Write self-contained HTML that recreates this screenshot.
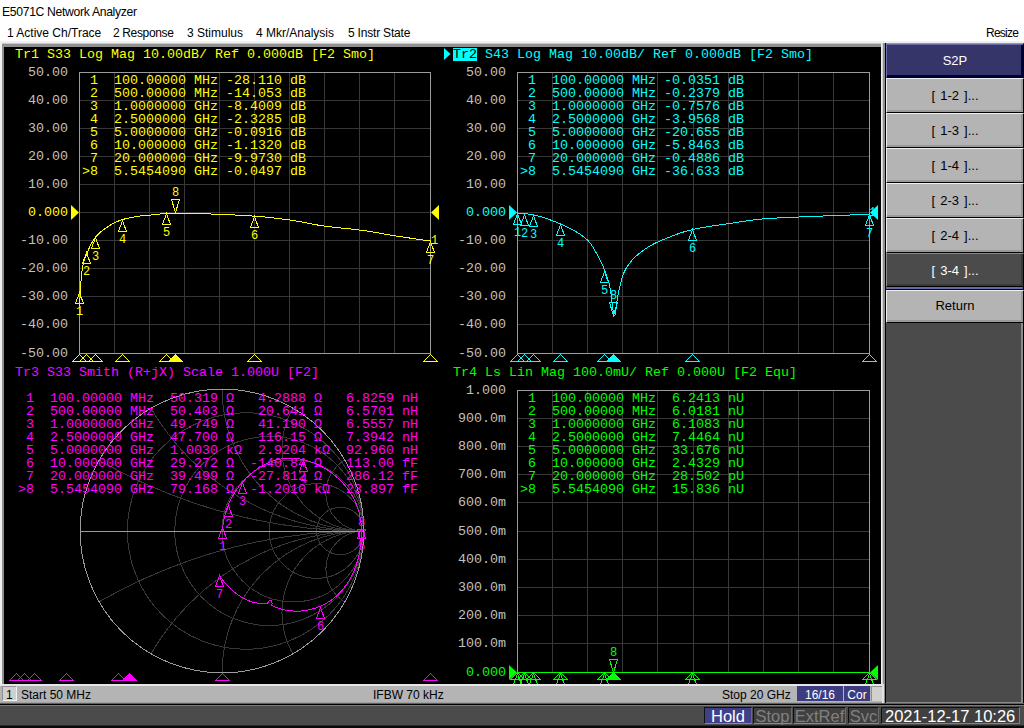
<!DOCTYPE html>
<html><head><meta charset="utf-8"><style>
html,body{margin:0;padding:0;}
body{width:1024px;height:728px;overflow:hidden;position:relative;background:#ffffff;font-family:"Liberation Sans", sans-serif;}
.a{position:absolute;}
.t{position:absolute;white-space:pre;line-height:1;}
.btn{position:absolute;left:886px;width:138px;height:35px;box-sizing:border-box;background:#b4b4b4;
 border-top:1px solid #f0f0f0;border-left:1px solid #f0f0f0;border-right:1px solid #000;border-bottom:1px solid #000;box-shadow:inset -2px -2px 0 #9a9a9a;}
.btn span{position:absolute;left:0;right:0;text-align:center;top:9px;font-size:13px;word-spacing:1.5px;color:#000;}
svg text{white-space:pre;}
</style></head><body>
<div class="t" style="left:2px;top:6px;font-size:12.2px;letter-spacing:-0.33px;color:#000">E5071C Network Analyzer</div>
<div class="t" style="left:7px;top:27px;font-size:12px;color:#000">1 Active Ch/Trace</div>
<div class="t" style="left:113px;top:27px;font-size:12px;letter-spacing:-0.35px;color:#000">2 Response</div>
<div class="t" style="left:187px;top:27px;font-size:12px;color:#000">3 Stimulus</div>
<div class="t" style="left:256px;top:27px;font-size:12px;color:#000">4 Mkr/Analysis</div>
<div class="t" style="left:348px;top:27px;font-size:12px;letter-spacing:-0.2px;color:#000">5 Instr State</div>
<div class="t" style="left:986px;top:27px;font-size:12px;letter-spacing:-0.75px;color:#000">Resize</div>
<!-- band under menu -->
<div class="a" style="left:0;top:41px;width:1024px;height:2px;background:#f0f0f0"></div>
<div class="a" style="left:0;top:43px;width:886px;height:1px;background:#c8c8c8"></div>
<div class="a" style="left:0;top:44px;width:886px;height:3px;background:#909090"></div>
<!-- left edge -->
<div class="a" style="left:0;top:43px;width:2px;height:662px;background:#f0f0f0"></div>
<div class="a" style="left:2px;top:44px;width:2px;height:640px;background:#909090"></div>
<!-- right of display -->
<div class="a" style="left:881px;top:43px;width:1px;height:661px;background:#f0f0f0"></div>
<div class="a" style="left:882px;top:43px;width:1px;height:661px;background:#d0d0d0"></div>
<div class="a" style="left:883px;top:43px;width:2px;height:661px;background:#909090"></div>
<div class="a" style="left:885px;top:43px;width:1px;height:661px;background:#000"></div>
<!-- softkey panel -->
<div class="a" style="left:886px;top:44px;width:136px;height:659px;background:#4b4b4b"></div>
<div class="a" style="left:1023px;top:43px;width:1px;height:661px;background:#000"></div>
<div class="a" style="left:886px;top:702px;width:137px;height:1px;background:#8a8a8a"></div>
<div class="a" style="left:1021px;top:323px;width:2px;height:380px;background:#8a8a8a"></div>
<div class="btn" style="top:43px;background:#35356a;border-top:1px solid #9090c8;border-left:1px solid #7070b0;box-shadow:inset 0 1px 0 #6a6aa0,inset -2px -2px 0 #000038"><span style="color:#fff;top:9px">S2P</span></div>
<div class="btn" style="top:78px"><span>[ 1-2 ]...</span></div>
<div class="btn" style="top:113px"><span>[ 1-3 ]...</span></div>
<div class="btn" style="top:148px"><span>[ 1-4 ]...</span></div>
<div class="btn" style="top:183px"><span>[ 2-3 ]...</span></div>
<div class="btn" style="top:218px"><span>[ 2-4 ]...</span></div>
<div class="btn" style="top:253px;height:34px;background:#4b4b4b;border-top:1px solid #8a8a8a;border-left:1px solid #8a8a8a;box-shadow:inset -2px -2px 0 #3a3a3a"><span style="color:#fff">[ 3-4 ]...</span></div>
<div class="a" style="left:886px;top:287px;width:137px;height:2px;background:#6a6aa8"></div>
<div class="a" style="left:886px;top:289px;width:137px;height:1px;background:#000030"></div>
<div class="btn" style="top:290px;height:33px"><span style="top:7px">Return</span></div>
<!-- display -->
<div class="a" style="left:4px;top:47px;width:877px;height:637px;background:#000"></div>
<svg class="a" style="left:0;top:0" width="1024" height="728" viewBox="0 0 1024 728">
<defs><clipPath id="disp"><rect x="4" y="47" width="877" height="637"/></clipPath></defs>
<g clip-path="url(#disp)">
<g style='font-family:"Liberation Mono",monospace;'>
<text x="15" y="58" fill="#ffff00" font-size="13.33" text-anchor="start" >Tr1 S33 Log Mag 10.00dB/ Ref 0.000dB [F2 Smo]</text>
<polygon points="444,48 444,60 450.5,54" fill="#00ffff"/>
<rect x="453" y="48" width="24" height="13" fill="#00ffff"/>
<text x="453" y="58" fill="#000" font-size="13.33" text-anchor="start" >Tr2</text>
<text x="485" y="58" fill="#00ffff" font-size="13.33" text-anchor="start" >S43 Log Mag 10.00dB/ Ref 0.000dB [F2 Smo]</text>
<text x="15" y="376" fill="#ff00ff" font-size="13.33" text-anchor="start" >Tr3 S33 Smith (R+jX) Scale 1.000U [F2]</text>
<text x="453" y="376" fill="#00ff00" font-size="13.33" text-anchor="start" >Tr4 Ls Lin Mag 100.0mU/ Ref 0.000U [F2 Equ]</text>
<rect x="114" y="72" width="1" height="282" fill="#383838"/>
<rect x="79" y="100" width="352" height="1" fill="#383838"/>
<rect x="149" y="72" width="1" height="282" fill="#383838"/>
<rect x="79" y="128" width="352" height="1" fill="#383838"/>
<rect x="184" y="72" width="1" height="282" fill="#383838"/>
<rect x="79" y="156" width="352" height="1" fill="#383838"/>
<rect x="219" y="72" width="1" height="282" fill="#383838"/>
<rect x="79" y="184" width="352" height="1" fill="#383838"/>
<rect x="254" y="72" width="1" height="282" fill="#383838"/>
<rect x="79" y="212" width="352" height="1" fill="#383838"/>
<rect x="289" y="72" width="1" height="282" fill="#383838"/>
<rect x="79" y="240" width="352" height="1" fill="#383838"/>
<rect x="324" y="72" width="1" height="282" fill="#383838"/>
<rect x="79" y="268" width="352" height="1" fill="#383838"/>
<rect x="359" y="72" width="1" height="282" fill="#383838"/>
<rect x="79" y="296" width="352" height="1" fill="#383838"/>
<rect x="394" y="72" width="1" height="282" fill="#383838"/>
<rect x="79" y="324" width="352" height="1" fill="#383838"/>
<rect x="79" y="72" width="352" height="1" fill="#9c9c9c"/>
<rect x="79" y="353" width="352" height="1" fill="#9c9c9c"/>
<rect x="79" y="72" width="1" height="282" fill="#9c9c9c"/>
<rect x="430" y="72" width="1" height="282" fill="#9c9c9c"/>
<rect x="552" y="72" width="1" height="282" fill="#383838"/>
<rect x="517" y="100" width="353" height="1" fill="#383838"/>
<rect x="587" y="72" width="1" height="282" fill="#383838"/>
<rect x="517" y="128" width="353" height="1" fill="#383838"/>
<rect x="622" y="72" width="1" height="282" fill="#383838"/>
<rect x="517" y="156" width="353" height="1" fill="#383838"/>
<rect x="657" y="72" width="1" height="282" fill="#383838"/>
<rect x="517" y="184" width="353" height="1" fill="#383838"/>
<rect x="693" y="72" width="1" height="282" fill="#383838"/>
<rect x="517" y="212" width="353" height="1" fill="#383838"/>
<rect x="728" y="72" width="1" height="282" fill="#383838"/>
<rect x="517" y="240" width="353" height="1" fill="#383838"/>
<rect x="763" y="72" width="1" height="282" fill="#383838"/>
<rect x="517" y="268" width="353" height="1" fill="#383838"/>
<rect x="798" y="72" width="1" height="282" fill="#383838"/>
<rect x="517" y="296" width="353" height="1" fill="#383838"/>
<rect x="833" y="72" width="1" height="282" fill="#383838"/>
<rect x="517" y="324" width="353" height="1" fill="#383838"/>
<rect x="517" y="72" width="353" height="1" fill="#9c9c9c"/>
<rect x="517" y="353" width="353" height="1" fill="#9c9c9c"/>
<rect x="517" y="72" width="1" height="282" fill="#9c9c9c"/>
<rect x="869" y="72" width="1" height="282" fill="#9c9c9c"/>
<rect x="552" y="390" width="1" height="283" fill="#383838"/>
<rect x="517" y="418" width="353" height="1" fill="#383838"/>
<rect x="587" y="390" width="1" height="283" fill="#383838"/>
<rect x="517" y="446" width="353" height="1" fill="#383838"/>
<rect x="622" y="390" width="1" height="283" fill="#383838"/>
<rect x="517" y="474" width="353" height="1" fill="#383838"/>
<rect x="657" y="390" width="1" height="283" fill="#383838"/>
<rect x="517" y="502" width="353" height="1" fill="#383838"/>
<rect x="693" y="390" width="1" height="283" fill="#383838"/>
<rect x="517" y="531" width="353" height="1" fill="#383838"/>
<rect x="728" y="390" width="1" height="283" fill="#383838"/>
<rect x="517" y="559" width="353" height="1" fill="#383838"/>
<rect x="763" y="390" width="1" height="283" fill="#383838"/>
<rect x="517" y="587" width="353" height="1" fill="#383838"/>
<rect x="798" y="390" width="1" height="283" fill="#383838"/>
<rect x="517" y="615" width="353" height="1" fill="#383838"/>
<rect x="833" y="390" width="1" height="283" fill="#383838"/>
<rect x="517" y="643" width="353" height="1" fill="#383838"/>
<rect x="517" y="390" width="353" height="1" fill="#9c9c9c"/>
<rect x="517" y="672" width="353" height="1" fill="#9c9c9c"/>
<rect x="517" y="390" width="1" height="283" fill="#9c9c9c"/>
<rect x="869" y="390" width="1" height="283" fill="#9c9c9c"/>
<text x="68" y="76" fill="#c0c0c0" font-size="13.33" text-anchor="end" >50.00</text>
<text x="506" y="76" fill="#c0c0c0" font-size="13.33" text-anchor="end" >50.00</text>
<text x="68" y="104" fill="#c0c0c0" font-size="13.33" text-anchor="end" >40.00</text>
<text x="506" y="104" fill="#c0c0c0" font-size="13.33" text-anchor="end" >40.00</text>
<text x="68" y="132" fill="#c0c0c0" font-size="13.33" text-anchor="end" >30.00</text>
<text x="506" y="132" fill="#c0c0c0" font-size="13.33" text-anchor="end" >30.00</text>
<text x="68" y="160" fill="#c0c0c0" font-size="13.33" text-anchor="end" >20.00</text>
<text x="506" y="160" fill="#c0c0c0" font-size="13.33" text-anchor="end" >20.00</text>
<text x="68" y="188" fill="#c0c0c0" font-size="13.33" text-anchor="end" >10.00</text>
<text x="506" y="188" fill="#c0c0c0" font-size="13.33" text-anchor="end" >10.00</text>
<text x="68" y="216" fill="#ffff00" font-size="13.33" text-anchor="end" >0.000</text>
<text x="506" y="216" fill="#00ffff" font-size="13.33" text-anchor="end" >0.000</text>
<text x="68" y="244" fill="#c0c0c0" font-size="13.33" text-anchor="end" >-10.00</text>
<text x="506" y="244" fill="#c0c0c0" font-size="13.33" text-anchor="end" >-10.00</text>
<text x="68" y="272" fill="#c0c0c0" font-size="13.33" text-anchor="end" >-20.00</text>
<text x="506" y="272" fill="#c0c0c0" font-size="13.33" text-anchor="end" >-20.00</text>
<text x="68" y="300" fill="#c0c0c0" font-size="13.33" text-anchor="end" >-30.00</text>
<text x="506" y="300" fill="#c0c0c0" font-size="13.33" text-anchor="end" >-30.00</text>
<text x="68" y="328" fill="#c0c0c0" font-size="13.33" text-anchor="end" >-40.00</text>
<text x="506" y="328" fill="#c0c0c0" font-size="13.33" text-anchor="end" >-40.00</text>
<text x="68" y="357" fill="#c0c0c0" font-size="13.33" text-anchor="end" >-50.00</text>
<text x="506" y="357" fill="#c0c0c0" font-size="13.33" text-anchor="end" >-50.00</text>
<text x="506" y="394" fill="#c0c0c0" font-size="13.33" text-anchor="end" >1.000</text>
<text x="506" y="422" fill="#c0c0c0" font-size="13.33" text-anchor="end" >900.0m</text>
<text x="506" y="450" fill="#c0c0c0" font-size="13.33" text-anchor="end" >800.0m</text>
<text x="506" y="478" fill="#c0c0c0" font-size="13.33" text-anchor="end" >700.0m</text>
<text x="506" y="506" fill="#c0c0c0" font-size="13.33" text-anchor="end" >600.0m</text>
<text x="506" y="535" fill="#c0c0c0" font-size="13.33" text-anchor="end" >500.0m</text>
<text x="506" y="563" fill="#c0c0c0" font-size="13.33" text-anchor="end" >400.0m</text>
<text x="506" y="591" fill="#c0c0c0" font-size="13.33" text-anchor="end" >300.0m</text>
<text x="506" y="619" fill="#c0c0c0" font-size="13.33" text-anchor="end" >200.0m</text>
<text x="506" y="647" fill="#c0c0c0" font-size="13.33" text-anchor="end" >100.0m</text>
<text x="506" y="676" fill="#00ff00" font-size="13.33" text-anchor="end" >0.000</text>
<polygon points="71,205 71,220 79,212.5" fill="#ffff00"/>
<polygon points="439,205 439,220 431,212.5" fill="#ffff00"/>
<polygon points="509,205 509,220 517,212.5" fill="#00ffff"/>
<polygon points="878,205 878,220 870,212.5" fill="#00ffff"/>
<polygon points="509,665 509,680 517,672.5" fill="#00ff00"/>
<polygon points="878,665 878,680 870,672.5" fill="#00ff00"/>
<text x="82" y="84" fill="#ffff00" font-size="13.33" text-anchor="start" xml:space="preserve"> 1  100.00000 MHz -28.110 dB</text>
<text x="82" y="97" fill="#ffff00" font-size="13.33" text-anchor="start" xml:space="preserve"> 2  500.00000 MHz -14.053 dB</text>
<text x="82" y="110" fill="#ffff00" font-size="13.33" text-anchor="start" xml:space="preserve"> 3  1.0000000 GHz -8.4009 dB</text>
<text x="82" y="123" fill="#ffff00" font-size="13.33" text-anchor="start" xml:space="preserve"> 4  2.5000000 GHz -2.3285 dB</text>
<text x="82" y="136" fill="#ffff00" font-size="13.33" text-anchor="start" xml:space="preserve"> 5  5.0000000 GHz -0.0916 dB</text>
<text x="82" y="149" fill="#ffff00" font-size="13.33" text-anchor="start" xml:space="preserve"> 6  10.000000 GHz -1.1320 dB</text>
<text x="82" y="162" fill="#ffff00" font-size="13.33" text-anchor="start" xml:space="preserve"> 7  20.000000 GHz -9.9730 dB</text>
<text x="82" y="175" fill="#ffff00" font-size="13.33" text-anchor="start" xml:space="preserve">&gt;8  5.5454090 GHz -0.0497 dB</text>
<text x="520" y="84" fill="#00ffff" font-size="13.33" text-anchor="start" xml:space="preserve"> 1  100.00000 MHz -0.0351 dB</text>
<text x="520" y="97" fill="#00ffff" font-size="13.33" text-anchor="start" xml:space="preserve"> 2  500.00000 MHz -0.2379 dB</text>
<text x="520" y="110" fill="#00ffff" font-size="13.33" text-anchor="start" xml:space="preserve"> 3  1.0000000 GHz -0.7576 dB</text>
<text x="520" y="123" fill="#00ffff" font-size="13.33" text-anchor="start" xml:space="preserve"> 4  2.5000000 GHz -3.9568 dB</text>
<text x="520" y="136" fill="#00ffff" font-size="13.33" text-anchor="start" xml:space="preserve"> 5  5.0000000 GHz -20.655 dB</text>
<text x="520" y="149" fill="#00ffff" font-size="13.33" text-anchor="start" xml:space="preserve"> 6  10.000000 GHz -5.8463 dB</text>
<text x="520" y="162" fill="#00ffff" font-size="13.33" text-anchor="start" xml:space="preserve"> 7  20.000000 GHz -0.4886 dB</text>
<text x="520" y="175" fill="#00ffff" font-size="13.33" text-anchor="start" xml:space="preserve">&gt;8  5.5454090 GHz -36.633 dB</text>
<text x="520" y="402" fill="#00ff00" font-size="13.33" text-anchor="start" xml:space="preserve"> 1  100.00000 MHz  6.2413 nU</text>
<text x="520" y="415" fill="#00ff00" font-size="13.33" text-anchor="start" xml:space="preserve"> 2  500.00000 MHz  6.0181 nU</text>
<text x="520" y="428" fill="#00ff00" font-size="13.33" text-anchor="start" xml:space="preserve"> 3  1.0000000 GHz  6.1083 nU</text>
<text x="520" y="441" fill="#00ff00" font-size="13.33" text-anchor="start" xml:space="preserve"> 4  2.5000000 GHz  7.4464 nU</text>
<text x="520" y="454" fill="#00ff00" font-size="13.33" text-anchor="start" xml:space="preserve"> 5  5.0000000 GHz  33.676 nU</text>
<text x="520" y="467" fill="#00ff00" font-size="13.33" text-anchor="start" xml:space="preserve"> 6  10.000000 GHz  2.4329 nU</text>
<text x="520" y="480" fill="#00ff00" font-size="13.33" text-anchor="start" xml:space="preserve"> 7  20.000000 GHz  28.502 pU</text>
<text x="520" y="493" fill="#00ff00" font-size="13.33" text-anchor="start" xml:space="preserve">&gt;8  5.5454090 GHz  15.836 nU</text>
<defs><clipPath id="uc"><circle cx="222.0" cy="531.0" r="142.4"/></clipPath></defs>
<g clip-path="url(#uc)" fill="none" stroke="#383838" stroke-width="1" shape-rendering="crispEdges">
<circle cx="245.65" cy="531.0" r="118.25"/>
<circle cx="269.30" cy="531.0" r="94.60"/>
<circle cx="292.95" cy="531.0" r="70.95"/>
<circle cx="316.60" cy="531.0" r="47.30"/>
<circle cx="340.25" cy="531.0" r="23.65"/>
<circle cx="363.90" cy="1.42" r="529.58"/>
<circle cx="363.90" cy="1060.58" r="529.58"/>
<circle cx="363.90" cy="285.22" r="245.78"/>
<circle cx="363.90" cy="776.78" r="245.78"/>
<circle cx="363.90" cy="389.10" r="141.90"/>
<circle cx="363.90" cy="672.90" r="141.90"/>
<circle cx="363.90" cy="449.07" r="81.93"/>
<circle cx="363.90" cy="612.93" r="81.93"/>
<circle cx="363.90" cy="492.98" r="38.02"/>
<circle cx="363.90" cy="569.02" r="38.02"/>
</g>
<circle cx="222.0" cy="531.0" r="141.9" fill="none" stroke="#9c9c9c" stroke-width="1" shape-rendering="crispEdges"/>
<rect x="80" y="531" width="284" height="1" fill="#9c9c9c"/>
<text x="18" y="402" fill="#ff00ff" font-size="13.33" text-anchor="start" xml:space="preserve"> 1  100.00000 MHz  50.319 Ω   4.2888 Ω   6.8259 nH</text>
<text x="18" y="415" fill="#ff00ff" font-size="13.33" text-anchor="start" xml:space="preserve"> 2  500.00000 MHz  50.403 Ω   20.641 Ω   6.5701 nH</text>
<text x="18" y="428" fill="#ff00ff" font-size="13.33" text-anchor="start" xml:space="preserve"> 3  1.0000000 GHz  49.749 Ω   41.190 Ω   6.5557 nH</text>
<text x="18" y="441" fill="#ff00ff" font-size="13.33" text-anchor="start" xml:space="preserve"> 4  2.5000000 GHz  47.700 Ω   116.15 Ω   7.3942 nH</text>
<text x="18" y="454" fill="#ff00ff" font-size="13.33" text-anchor="start" xml:space="preserve"> 5  5.0000000 GHz  1.0030 kΩ  2.9204 kΩ  92.960 nH</text>
<text x="18" y="467" fill="#ff00ff" font-size="13.33" text-anchor="start" xml:space="preserve"> 6  10.000000 GHz  29.272 Ω  -140.84 Ω   113.00 fF</text>
<text x="18" y="480" fill="#ff00ff" font-size="13.33" text-anchor="start" xml:space="preserve"> 7  20.000000 GHz  39.499 Ω  -27.812 Ω   286.12 fF</text>
<text x="18" y="493" fill="#ff00ff" font-size="13.33" text-anchor="start" xml:space="preserve">&gt;8  5.5454090 GHz  79.168 Ω  -1.2010 kΩ  23.897 fF</text>
<polyline points="79.50,305.73 79.58,304.43 79.67,303.13 79.75,301.83 79.84,300.52 79.92,299.21 80.00,297.90 80.09,296.58 80.17,295.26 80.26,293.94 80.34,292.62 80.42,291.28 80.51,289.86 80.59,288.38 80.68,286.87 80.76,285.36 80.84,283.87 80.93,282.42 81.01,281.05 81.10,279.78 81.18,278.64 81.26,277.66 81.35,276.83 81.43,276.04 81.52,275.27 81.60,274.53 81.68,273.81 81.77,273.12 81.85,272.46 81.94,271.81 82.02,271.19 82.10,270.59 82.19,270.01 82.27,269.45 82.36,268.91 82.44,268.39 82.52,267.89 82.61,267.41 82.69,266.94 82.78,266.49 82.86,266.06 82.94,265.64 83.03,265.23 83.11,264.84 83.20,264.47 83.28,264.10 83.36,263.75 83.45,263.41 83.53,263.08 83.62,262.76 83.70,262.44 83.78,262.13 83.87,261.83 83.95,261.53 84.04,261.25 84.12,260.96 84.20,260.69 84.29,260.42 84.37,260.16 84.46,259.90 84.54,259.65 84.62,259.40 84.71,259.16 84.79,258.92 84.88,258.69 84.96,258.46 85.04,258.23 85.13,258.01 85.21,257.79 85.30,257.58 85.38,257.37 85.46,257.16 85.55,256.95 85.63,256.75 85.72,256.55 85.80,256.35 85.88,256.15 85.97,255.95 86.05,255.75 86.14,255.56 86.22,255.36 86.30,255.16 86.39,254.97 86.47,254.77 86.56,254.58 86.64,254.38 86.72,254.18 86.81,253.99 86.89,253.79 86.98,253.59 87.06,253.38 87.14,253.18 87.23,252.97 87.31,252.76 87.40,252.55 87.48,252.33 87.56,252.11 87.65,251.90 87.73,251.68 87.82,251.46 87.90,251.24 87.98,251.03 88.07,250.81 88.15,250.59 88.24,250.37 88.32,250.16 88.40,249.94 88.49,249.73 88.57,249.51 88.66,249.30 88.74,249.09 88.82,248.88 88.91,248.67 88.99,248.46 89.08,248.26 89.16,248.06 89.24,247.86 89.33,247.66 89.41,247.46 89.49,247.27 89.58,247.08 89.66,246.90 89.75,246.71 89.83,246.53 89.91,246.36 90.00,246.18 90.08,246.02 90.17,245.85 90.25,245.69 90.33,245.53 90.42,245.37 90.50,245.21 90.59,245.05 90.67,244.90 90.75,244.74 90.84,244.59 90.92,244.44 91.01,244.28 91.09,244.13 91.17,243.98 91.26,243.83 91.34,243.68 91.43,243.54 91.51,243.39 91.59,243.25 91.68,243.10 91.76,242.96 91.85,242.82 91.93,242.67 92.01,242.53 92.10,242.39 92.18,242.25 92.27,242.12 92.35,241.98 92.43,241.84 92.52,241.71 92.60,241.57 92.69,241.44 92.77,241.31 92.85,241.18 92.94,241.05 93.02,240.92 93.11,240.79 93.19,240.66 93.27,240.53 93.36,240.41 93.44,240.28 93.53,240.16 93.61,240.03 93.69,239.91 93.78,239.79 93.86,239.67 93.95,239.55 94.03,239.43 94.11,239.31 94.20,239.19 94.28,239.08 94.37,238.96 94.45,238.84 94.53,238.73 94.62,238.62 94.70,238.50 94.79,238.39 94.87,238.28 94.95,238.17 95.04,238.06 95.12,237.95 95.21,237.84 95.29,237.74 95.37,237.63 95.46,237.52 95.54,237.42 95.63,237.31 95.71,237.21 95.79,237.11 95.88,237.01 95.96,236.91 96.05,236.81 96.13,236.71 96.21,236.61 96.21,236.61 97.05,235.64 97.89,234.72 98.73,233.85 99.57,233.01 100.40,232.22 101.24,231.47 102.08,230.76 102.92,230.10 103.75,229.48 104.59,228.89 105.43,228.32 106.27,227.75 107.11,227.20 107.94,226.65 108.78,226.12 109.62,225.60 110.46,225.10 111.29,224.60 112.13,224.12 112.97,223.66 113.81,223.21 114.65,222.78 115.48,222.36 116.32,221.96 117.16,221.57 118.00,221.21 118.84,220.86 119.67,220.53 120.51,220.23 121.35,219.94 122.19,219.67 123.02,219.42 123.86,219.18 124.70,218.96 125.54,218.74 126.38,218.52 127.21,218.32 128.05,218.12 128.89,217.94 129.73,217.76 130.56,217.58 131.40,217.42 132.24,217.26 133.08,217.10 133.92,216.96 134.75,216.82 135.59,216.68 136.43,216.55 137.27,216.43 138.10,216.31 138.94,216.20 139.78,216.09 140.62,215.98 141.46,215.89 142.29,215.79 143.13,215.70 143.97,215.61 144.81,215.53 145.65,215.45 146.48,215.37 147.32,215.29 148.16,215.22 149.00,215.14 149.83,215.07 150.67,215.00 151.51,214.92 152.35,214.85 153.19,214.77 154.02,214.70 154.86,214.62 155.70,214.54 156.54,214.45 157.37,214.37 158.21,214.28 159.05,214.19 159.89,214.08 160.73,213.95 161.56,213.82 162.40,213.69 163.24,213.57 164.08,213.46 164.91,213.36 165.75,213.29 166.59,213.26 167.43,213.24 168.27,213.22 169.10,213.21 169.94,213.19 170.78,213.18 171.62,213.17 172.45,213.16 173.29,213.15 174.13,213.15 174.97,213.14 175.81,213.14 176.64,213.14 177.48,213.14 178.32,213.15 179.16,213.15 180.00,213.16 180.83,213.16 181.67,213.17 182.51,213.18 183.35,213.20 184.18,213.21 185.02,213.22 185.86,213.24 186.70,213.26 187.54,213.27 188.37,213.29 189.21,213.31 190.05,213.33 190.89,213.35 191.72,213.38 192.56,213.40 193.40,213.42 194.24,213.45 195.08,213.47 195.91,213.50 196.75,213.52 197.59,213.55 198.43,213.58 199.26,213.60 200.10,213.63 200.94,213.66 201.78,213.69 202.62,213.72 203.45,213.74 204.29,213.77 205.13,213.80 205.97,213.83 206.81,213.86 207.64,213.89 208.48,213.91 209.32,213.94 210.16,213.97 210.99,214.00 211.83,214.02 212.67,214.05 213.51,214.08 214.35,214.11 215.18,214.14 216.02,214.17 216.86,214.20 217.70,214.23 218.53,214.27 219.37,214.30 220.21,214.33 221.05,214.36 221.89,214.40 222.72,214.43 223.56,214.47 224.40,214.50 225.24,214.54 226.07,214.58 226.91,214.61 227.75,214.65 228.59,214.69 229.43,214.73 230.26,214.77 231.10,214.81 231.94,214.85 232.78,214.89 233.61,214.93 234.45,214.98 235.29,215.02 236.13,215.06 236.97,215.11 237.80,215.15 238.64,215.20 239.48,215.24 240.32,215.29 241.16,215.34 241.99,215.39 242.83,215.43 243.67,215.48 244.51,215.53 245.34,215.58 246.18,215.63 247.02,215.69 247.86,215.74 248.70,215.79 249.53,215.85 250.37,215.90 251.21,215.95 252.05,216.01 252.88,216.07 253.72,216.12 254.56,216.18 255.40,216.24 256.24,216.30 257.07,216.36 257.91,216.43 258.75,216.49 259.59,216.56 260.42,216.63 261.26,216.71 262.10,216.78 262.94,216.86 263.78,216.93 264.61,217.01 265.45,217.09 266.29,217.17 267.13,217.26 267.97,217.34 268.80,217.43 269.64,217.52 270.48,217.61 271.32,217.70 272.15,217.79 272.99,217.88 273.83,217.98 274.67,218.07 275.51,218.17 276.34,218.27 277.18,218.37 278.02,218.47 278.86,218.57 279.69,218.67 280.53,218.77 281.37,218.88 282.21,218.98 283.05,219.09 283.88,219.20 284.72,219.30 285.56,219.41 286.40,219.52 287.23,219.63 288.07,219.74 288.91,219.85 289.75,219.97 290.59,220.09 291.42,220.21 292.26,220.34 293.10,220.48 293.94,220.61 294.77,220.75 295.61,220.90 296.45,221.04 297.29,221.19 298.13,221.34 298.96,221.50 299.80,221.65 300.64,221.81 301.48,221.97 302.32,222.13 303.15,222.29 303.99,222.45 304.83,222.62 305.67,222.78 306.50,222.95 307.34,223.11 308.18,223.27 309.02,223.44 309.86,223.60 310.69,223.76 311.53,223.92 312.37,224.08 313.21,224.24 314.04,224.39 314.88,224.55 315.72,224.70 316.56,224.84 317.40,224.99 318.23,225.13 319.07,225.27 319.91,225.41 320.75,225.54 321.58,225.67 322.42,225.79 323.26,225.91 324.10,226.03 324.94,226.14 325.77,226.25 326.61,226.36 327.45,226.47 328.29,226.57 329.13,226.67 329.96,226.78 330.80,226.88 331.64,226.97 332.48,227.07 333.31,227.17 334.15,227.26 334.99,227.35 335.83,227.44 336.67,227.53 337.50,227.63 338.34,227.71 339.18,227.80 340.02,227.89 340.85,227.98 341.69,228.07 342.53,228.15 343.37,228.24 344.21,228.33 345.04,228.41 345.88,228.50 346.72,228.59 347.56,228.68 348.39,228.77 349.23,228.85 350.07,228.94 350.91,229.03 351.75,229.13 352.58,229.22 353.42,229.31 354.26,229.41 355.10,229.50 355.94,229.60 356.77,229.70 357.61,229.80 358.45,229.90 359.29,230.00 360.12,230.11 360.96,230.22 361.80,230.33 362.64,230.44 363.48,230.56 364.31,230.67 365.15,230.79 365.99,230.92 366.83,231.04 367.66,231.17 368.50,231.30 369.34,231.43 370.18,231.57 371.02,231.70 371.85,231.84 372.69,231.98 373.53,232.12 374.37,232.26 375.20,232.41 376.04,232.55 376.88,232.69 377.72,232.84 378.56,232.99 379.39,233.13 380.23,233.28 381.07,233.43 381.91,233.58 382.74,233.72 383.58,233.87 384.42,234.02 385.26,234.17 386.10,234.31 386.93,234.46 387.77,234.60 388.61,234.75 389.45,234.89 390.29,235.03 391.12,235.17 391.96,235.31 392.80,235.44 393.64,235.58 394.47,235.71 395.31,235.84 396.15,235.97 396.99,236.10 397.83,236.23 398.66,236.36 399.50,236.49 400.34,236.62 401.18,236.75 402.01,236.88 402.85,237.01 403.69,237.14 404.53,237.26 405.37,237.39 406.20,237.52 407.04,237.64 407.88,237.77 408.72,237.89 409.55,238.02 410.39,238.14 411.23,238.27 412.07,238.39 412.91,238.52 413.74,238.64 414.58,238.76 415.42,238.88 416.26,239.01 417.10,239.13 417.93,239.25 418.77,239.37 419.61,239.49 420.45,239.61 421.28,239.73 422.12,239.85 422.96,239.97 423.80,240.09 424.64,240.21 425.47,240.33 426.31,240.44 427.15,240.56 427.99,240.68 428.82,240.79 429.66,240.91 430.50,241.02" fill="none" stroke="#ffff00" stroke-width="1" shape-rendering="crispEdges"/>
<polyline points="517.50,213.06 517.79,213.07 518.08,213.08 518.38,213.10 518.67,213.12 518.96,213.13 519.25,213.15 519.54,213.17 519.84,213.19 520.13,213.21 520.42,213.23 520.71,213.25 521.01,213.27 521.30,213.29 521.59,213.31 521.88,213.34 522.17,213.36 522.47,213.38 522.76,213.41 523.05,213.43 523.34,213.46 523.63,213.49 523.93,213.52 524.22,213.54 524.51,213.57 524.80,213.60 525.09,213.63 525.39,213.66 525.68,213.69 525.97,213.73 526.26,213.76 526.56,213.80 526.85,213.84 527.14,213.88 527.43,213.92 527.72,213.96 528.02,214.00 528.31,214.05 528.60,214.09 528.89,214.14 529.18,214.18 529.48,214.23 529.77,214.28 530.06,214.33 530.35,214.38 530.64,214.44 530.94,214.49 531.23,214.54 531.52,214.60 531.81,214.65 532.11,214.71 532.40,214.76 532.69,214.82 532.98,214.88 533.27,214.93 533.57,214.99 533.86,215.05 534.15,215.11 534.44,215.17 534.73,215.22 535.03,215.29 535.32,215.35 535.61,215.41 535.90,215.48 536.19,215.54 536.49,215.61 536.78,215.68 537.07,215.75 537.36,215.82 537.66,215.89 537.95,215.97 538.24,216.04 538.53,216.12 538.82,216.19 539.12,216.27 539.41,216.35 539.70,216.43 539.99,216.51 540.28,216.59 540.58,216.67 540.87,216.76 541.16,216.84 541.45,216.93 541.74,217.01 542.04,217.10 542.33,217.19 542.62,217.28 542.91,217.37 543.20,217.46 543.50,217.55 543.79,217.64 544.08,217.74 544.37,217.83 544.67,217.93 544.96,218.02 545.25,218.12 545.54,218.22 545.83,218.32 546.13,218.42 546.42,218.52 546.71,218.62 547.00,218.72 547.29,218.82 547.59,218.93 547.88,219.03 548.17,219.14 548.46,219.24 548.75,219.35 549.05,219.45 549.34,219.56 549.63,219.67 549.92,219.78 550.22,219.89 550.51,220.00 550.80,220.11 551.09,220.22 551.38,220.33 551.68,220.44 551.97,220.55 552.26,220.67 552.55,220.78 552.84,220.90 553.14,221.01 553.43,221.13 553.72,221.24 554.01,221.36 554.30,221.47 554.60,221.59 554.89,221.71 555.18,221.83 555.47,221.94 555.77,222.06 556.06,222.18 556.35,222.30 556.64,222.42 556.93,222.54 557.23,222.66 557.52,222.78 557.81,222.90 558.10,223.02 558.39,223.14 558.69,223.26 558.98,223.39 559.27,223.51 559.56,223.63 559.85,223.75 560.15,223.87 560.44,224.00 560.73,224.12 561.02,224.24 561.32,224.37 561.61,224.49 561.90,224.61 562.19,224.74 562.48,224.86 562.78,224.99 563.07,225.12 563.36,225.24 563.65,225.37 563.94,225.50 564.24,225.63 564.53,225.75 564.82,225.88 565.11,226.01 565.40,226.15 565.70,226.28 565.99,226.41 566.28,226.55 566.57,226.68 566.87,226.82 567.16,226.95 567.45,227.09 567.74,227.23 568.03,227.37 568.33,227.51 568.62,227.65 568.91,227.80 569.20,227.94 569.49,228.09 569.79,228.24 570.08,228.38 570.37,228.53 570.66,228.69 570.95,228.84 571.25,228.99 571.54,229.15 571.83,229.31 572.12,229.46 572.42,229.63 572.71,229.79 573.00,229.95 573.29,230.12 573.58,230.28 573.88,230.45 574.17,230.62 574.46,230.79 574.75,230.96 575.04,231.13 575.34,231.30 575.63,231.47 575.92,231.64 576.21,231.81 576.50,231.98 576.80,232.16 577.09,232.33 577.38,232.51 577.67,232.69 577.97,232.87 578.26,233.05 578.55,233.24 578.84,233.42 579.13,233.61 579.43,233.80 579.72,233.99 580.01,234.18 580.30,234.38 580.59,234.58 580.89,234.78 581.18,234.98 581.47,235.18 581.76,235.39 582.05,235.60 582.35,235.82 582.64,236.03 582.93,236.25 583.22,236.48 583.51,236.70 583.81,236.93 584.10,237.17 584.39,237.40 584.68,237.64 584.98,237.89 585.27,238.13 585.56,238.38 585.85,238.64 586.14,238.90 586.44,239.16 586.73,239.43 587.02,239.70 587.31,239.98 587.60,240.26 587.90,240.55 588.19,240.84 588.48,241.14 588.77,241.45 589.06,241.78 589.36,242.12 589.65,242.48 589.94,242.85 590.23,243.23 590.53,243.62 590.82,244.03 591.11,244.44 591.40,244.87 591.69,245.30 591.99,245.74 592.28,246.19 592.57,246.65 592.86,247.11 593.15,247.58 593.45,248.06 593.74,248.54 594.03,249.03 594.32,249.52 594.61,250.01 594.91,250.50 595.20,251.00 595.49,251.50 595.78,252.00 596.08,252.49 596.37,252.99 596.66,253.49 596.95,253.99 597.24,254.50 597.54,255.02 597.83,255.54 598.12,256.07 598.41,256.61 598.70,257.16 599.00,257.71 599.29,258.28 599.58,258.85 599.87,259.43 600.16,260.01 600.46,260.61 600.75,261.22 601.04,261.83 601.33,262.46 601.63,263.09 601.92,263.74 602.21,264.41 602.50,265.10 602.79,265.80 603.09,266.51 603.38,267.24 603.67,267.98 603.96,268.74 604.25,269.50 604.55,270.27 604.84,271.04 604.84,271.04 604.94,271.32 605.05,271.60 605.16,271.88 605.26,272.16 605.37,272.43 605.48,272.71 605.58,272.98 605.69,273.25 605.80,273.53 605.90,273.80 606.01,274.08 606.12,274.35 606.22,274.63 606.33,274.91 606.43,275.19 606.54,275.47 606.65,275.76 606.75,276.05 606.86,276.34 606.97,276.63 607.07,276.93 607.18,277.24 607.29,277.54 607.39,277.86 607.50,278.17 607.60,278.50 607.71,278.83 607.82,279.16 607.92,279.50 608.03,279.85 608.14,280.21 608.24,280.57 608.35,280.94 608.46,281.32 608.56,281.70 608.67,282.10 608.78,282.51 608.88,282.93 608.99,283.38 609.09,283.85 609.20,284.33 609.31,284.83 609.41,285.35 609.52,285.88 609.63,286.42 609.73,286.97 609.84,287.54 609.95,288.11 610.05,288.69 610.16,289.28 610.26,289.87 610.37,290.46 610.48,291.06 610.58,291.66 610.69,292.26 610.80,292.86 610.90,293.46 611.01,294.11 611.12,294.80 611.22,295.52 611.33,296.29 611.43,297.08 611.54,297.90 611.65,298.74 611.75,299.60 611.86,300.48 611.97,301.37 612.07,302.26 612.18,303.16 612.29,304.06 612.39,304.95 612.50,305.84 612.61,306.71 612.71,307.57 612.82,308.41 612.92,309.22 613.03,310.00 613.14,310.76 613.24,311.48 613.35,312.16 613.46,312.79 613.56,313.38 613.67,313.92 613.78,314.40 613.88,314.83 613.99,315.19 614.09,315.49 614.20,315.71 614.31,315.86 614.41,315.93 614.52,315.92 614.63,315.84 614.73,315.67 614.84,315.44 614.95,315.14 615.05,314.77 615.16,314.35 615.27,313.87 615.37,313.34 615.48,312.76 615.58,312.14 615.69,311.48 615.80,310.78 615.90,310.05 616.01,309.28 616.12,308.50 616.22,307.69 616.33,306.87 616.44,306.03 616.54,305.19 616.65,304.34 616.75,303.48 616.86,302.63 616.97,301.79 617.07,300.95 617.18,300.13 617.29,299.32 617.39,298.54 617.50,297.78 617.61,297.05 617.71,296.35 617.82,295.69 617.93,295.07 618.03,294.50 618.14,293.96 618.24,293.43 618.35,292.91 618.46,292.40 618.56,291.89 618.67,291.39 618.78,290.90 618.88,290.41 618.99,289.92 619.10,289.45 619.20,288.98 619.31,288.51 619.41,288.05 619.52,287.60 619.63,287.15 619.73,286.71 619.84,286.28 619.95,285.85 620.05,285.43 620.16,285.01 620.27,284.60 620.37,284.19 620.48,283.78 620.59,283.37 620.69,282.97 620.80,282.56 620.90,282.16 621.01,281.76 621.12,281.36 621.22,280.96 621.33,280.57 621.44,280.18 621.54,279.79 621.65,279.41 621.76,279.03 621.86,278.65 621.97,278.28 622.07,277.92 622.18,277.56 622.29,277.21 622.39,276.86 622.50,276.52 622.61,276.19 622.71,275.87 622.82,275.55 622.93,275.24 623.03,274.94 623.14,274.64 623.24,274.36 623.35,274.09 623.46,273.82 623.56,273.57 623.67,273.32 623.78,273.08 623.88,272.84 623.99,272.60 624.10,272.37 624.20,272.14 624.31,271.91 624.42,271.69 624.52,271.46 624.63,271.24 624.73,271.03 624.84,270.81 624.95,270.60 625.05,270.39 625.16,270.18 625.27,269.98 625.37,269.77 625.48,269.57 625.59,269.37 625.69,269.18 625.80,268.98 625.90,268.79 626.01,268.60 626.01,268.60 626.83,267.22 627.64,265.95 628.45,264.76 629.27,263.65 630.08,262.60 630.90,261.59 631.71,260.63 632.53,259.72 633.34,258.85 634.15,258.02 634.97,257.23 635.78,256.47 636.60,255.74 637.41,255.02 638.23,254.33 639.04,253.65 639.86,252.99 640.67,252.34 641.48,251.71 642.30,251.09 643.11,250.49 643.93,249.91 644.74,249.34 645.56,248.78 646.37,248.24 647.18,247.72 648.00,247.20 648.81,246.70 649.63,246.21 650.44,245.74 651.26,245.27 652.07,244.82 652.88,244.38 653.70,243.96 654.51,243.54 655.33,243.14 656.14,242.74 656.96,242.36 657.77,241.99 658.59,241.64 659.40,241.28 660.21,240.93 661.03,240.58 661.84,240.24 662.66,239.89 663.47,239.55 664.29,239.20 665.10,238.86 665.91,238.53 666.73,238.19 667.54,237.86 668.36,237.52 669.17,237.20 669.99,236.87 670.80,236.55 671.61,236.23 672.43,235.91 673.24,235.60 674.06,235.29 674.87,234.99 675.69,234.68 676.50,234.39 677.31,234.09 678.13,233.80 678.94,233.52 679.76,233.24 680.57,232.96 681.39,232.69 682.20,232.43 683.02,232.17 683.83,231.91 684.64,231.66 685.46,231.42 686.27,231.18 687.09,230.95 687.90,230.72 688.72,230.50 689.53,230.28 690.34,230.07 691.16,229.87 691.97,229.68 692.79,229.49 693.60,229.31 694.42,229.13 695.23,228.95 696.04,228.78 696.86,228.62 697.67,228.45 698.49,228.29 699.30,228.14 700.12,227.98 700.93,227.83 701.75,227.68 702.56,227.54 703.37,227.39 704.19,227.25 705.00,227.11 705.82,226.98 706.63,226.84 707.45,226.71 708.26,226.58 709.07,226.45 709.89,226.33 710.70,226.20 711.52,226.08 712.33,225.96 713.15,225.83 713.96,225.71 714.77,225.60 715.59,225.48 716.40,225.36 717.22,225.24 718.03,225.13 718.85,225.01 719.66,224.90 720.48,224.78 721.29,224.66 722.10,224.55 722.92,224.43 723.73,224.32 724.55,224.20 725.36,224.09 726.18,223.97 726.99,223.85 727.80,223.73 728.62,223.61 729.43,223.49 730.25,223.37 731.06,223.25 731.88,223.12 732.69,223.00 733.50,222.87 734.32,222.75 735.13,222.62 735.95,222.50 736.76,222.37 737.58,222.25 738.39,222.12 739.21,222.00 740.02,221.87 740.83,221.75 741.65,221.62 742.46,221.50 743.28,221.38 744.09,221.26 744.91,221.14 745.72,221.02 746.53,220.90 747.35,220.78 748.16,220.67 748.98,220.55 749.79,220.44 750.61,220.33 751.42,220.22 752.23,220.11 753.05,220.01 753.86,219.91 754.68,219.81 755.49,219.71 756.31,219.61 757.12,219.52 757.93,219.43 758.75,219.34 759.56,219.26 760.38,219.18 761.19,219.10 762.01,219.02 762.82,218.95 763.64,218.88 764.45,218.82 765.26,218.76 766.08,218.70 766.89,218.64 767.71,218.59 768.52,218.53 769.34,218.48 770.15,218.42 770.96,218.37 771.78,218.32 772.59,218.27 773.41,218.23 774.22,218.18 775.04,218.13 775.85,218.09 776.66,218.04 777.48,218.00 778.29,217.96 779.11,217.91 779.92,217.87 780.74,217.83 781.55,217.79 782.37,217.75 783.18,217.71 783.99,217.68 784.81,217.64 785.62,217.60 786.44,217.56 787.25,217.53 788.07,217.49 788.88,217.45 789.69,217.42 790.51,217.38 791.32,217.35 792.14,217.31 792.95,217.28 793.77,217.24 794.58,217.21 795.39,217.17 796.21,217.14 797.02,217.10 797.84,217.06 798.65,217.03 799.47,216.99 800.28,216.96 801.10,216.92 801.91,216.88 802.72,216.85 803.54,216.81 804.35,216.77 805.17,216.74 805.98,216.70 806.80,216.66 807.61,216.63 808.42,216.59 809.24,216.56 810.05,216.52 810.87,216.49 811.68,216.46 812.50,216.42 813.31,216.39 814.12,216.35 814.94,216.32 815.75,216.29 816.57,216.25 817.38,216.22 818.20,216.19 819.01,216.15 819.83,216.12 820.64,216.09 821.45,216.06 822.27,216.02 823.08,215.99 823.90,215.96 824.71,215.93 825.53,215.90 826.34,215.86 827.15,215.83 827.97,215.80 828.78,215.77 829.60,215.74 830.41,215.71 831.23,215.68 832.04,215.65 832.85,215.62 833.67,215.59 834.48,215.56 835.30,215.53 836.11,215.50 836.93,215.47 837.74,215.44 838.55,215.41 839.37,215.38 840.18,215.35 841.00,215.32 841.81,215.29 842.63,215.26 843.44,215.23 844.26,215.20 845.07,215.18 845.88,215.15 846.70,215.12 847.51,215.09 848.33,215.06 849.14,215.03 849.96,215.01 850.77,214.98 851.58,214.95 852.40,214.92 853.21,214.89 854.03,214.87 854.84,214.84 855.66,214.81 856.47,214.79 857.28,214.76 858.10,214.73 858.91,214.71 859.73,214.68 860.54,214.65 861.36,214.63 862.17,214.60 862.99,214.57 863.80,214.55 864.61,214.52 865.43,214.50 866.24,214.47 867.06,214.45 867.87,214.42 868.69,214.40 869.50,214.37" fill="none" stroke="#00ffff" stroke-width="1" shape-rendering="crispEdges"/>
<polyline points="517.00,672.50 869.00,672.50" fill="none" stroke="#00ff00" stroke-width="1" shape-rendering="crispEdges"/>
<polyline points="222.44,529.93 222.50,529.23 222.56,528.54 222.62,527.84 222.70,527.14 222.78,526.44 222.87,525.74 222.96,525.04 223.06,524.34 223.16,523.64 223.27,522.94 223.39,522.24 223.51,521.54 223.64,520.84 223.78,520.14 223.92,519.44 224.07,518.74 224.23,518.04 224.39,517.34 224.56,516.64 224.73,515.94 224.91,515.25 225.10,514.55 225.29,513.86 225.49,513.16 225.69,512.47 225.91,511.78 226.12,511.08 226.35,510.39 226.58,509.71 226.81,509.02 227.06,508.33 227.30,507.65 227.56,506.96 227.82,506.28 228.09,505.60 228.36,504.93 228.64,504.25 228.93,503.58 229.22,502.90 229.52,502.23 229.83,501.56 230.14,500.90 230.45,500.23 230.78,499.57 231.11,498.91 231.44,498.26 231.79,497.60 232.14,496.95 232.49,496.30 232.85,495.66 233.22,495.02 233.59,494.38 233.97,493.74 234.36,493.10 234.75,492.47 235.15,491.85 235.55,491.22 235.96,490.60 236.38,489.98 236.80,489.37 237.23,488.76 237.66,488.15 238.10,487.55 238.55,486.95 238.99,486.35 239.45,485.76 239.91,485.18 240.38,484.59 240.85,484.01 241.32,483.44 241.81,482.87 242.29,482.30 242.78,481.74 243.28,481.19 243.78,480.63 244.29,480.09 244.80,479.54 245.31,479.01 245.83,478.47 246.36,477.95 246.89,477.43 247.42,476.91 247.96,476.40 248.50,475.89 249.05,475.39 249.60,474.90 250.16,474.41 250.72,473.92 251.28,473.44 251.85,472.97 252.42,472.51 253.00,472.05 253.58,471.59 254.16,471.14 254.75,470.70 255.34,470.27 255.93,469.84 256.53,469.42 257.13,469.00 257.74,468.59 258.35,468.19 258.96,467.79 259.57,467.40 260.19,467.02 260.81,466.65 261.44,466.28 262.07,465.92 262.70,465.57 263.33,465.22 263.97,464.88 264.60,464.55 265.25,464.23 265.89,463.91 266.54,463.60 267.19,463.30 267.84,463.01 268.49,462.73 269.15,462.45 269.81,462.18 270.47,461.92 271.14,461.67 271.80,461.43 272.47,461.19 273.14,460.96 273.81,460.75 274.49,460.54 275.16,460.34 275.84,460.14 276.52,459.96 277.20,459.79 277.88,459.62 278.57,459.47 279.25,459.32 279.94,459.18 280.63,459.06 281.32,458.94 282.01,458.83 282.70,458.73 283.40,458.64 284.09,458.56 284.79,458.48 285.49,458.42 286.18,458.37 286.88,458.32 287.58,458.28 288.28,458.26 288.98,458.24 289.68,458.23 290.38,458.23 291.08,458.24 291.79,458.25 292.49,458.28 293.19,458.31 293.89,458.35 294.59,458.40 295.30,458.46 296.00,458.53 296.70,458.60 297.40,458.69 298.10,458.78 298.81,458.88 299.51,458.98 300.21,459.10 300.91,459.22 301.60,459.35 302.30,459.49 303.00,459.64 303.69,459.80 304.39,459.96 305.08,460.13 305.78,460.31 306.47,460.49 307.16,460.68 307.85,460.88 308.54,461.09 309.22,461.31 309.91,461.53 310.59,461.76 311.27,462.00 311.95,462.24 312.63,462.49 313.31,462.75 313.98,463.01 314.66,463.28 315.33,463.56 315.99,463.85 316.66,464.14 317.32,464.44 317.98,464.75 318.64,465.06 319.30,465.38 319.95,465.70 320.61,466.03 321.25,466.37 321.90,466.72 322.54,467.07 323.18,467.42 323.82,467.79 324.45,468.16 325.08,468.53 325.71,468.91 326.34,469.30 326.96,469.69 327.58,470.09 328.19,470.50 328.80,470.91 329.41,471.33 330.01,471.75 330.61,472.18 331.21,472.61 331.80,473.05 332.39,473.50 332.97,473.95 333.55,474.40 334.13,474.86 334.70,475.33 335.26,475.80 335.83,476.28 336.38,476.76 336.94,477.24 337.49,477.74 338.03,478.23 338.57,478.73 339.11,479.24 339.64,479.75 340.16,480.27 340.68,480.79 341.20,481.31 341.71,481.84 342.21,482.38 342.71,482.92 343.21,483.46 343.70,484.01 344.18,484.56 344.66,485.12 345.13,485.68 345.59,486.24 346.06,486.81 346.51,487.39 346.96,487.96 347.40,488.54 347.84,489.13 348.27,489.72 348.69,490.31 349.11,490.91 349.52,491.51 349.93,492.11 350.33,492.72 350.72,493.33 351.11,493.95 351.49,494.56 351.86,495.19 352.22,495.81 352.58,496.44 352.94,497.07 353.28,497.71 353.62,498.34 353.95,498.99 354.27,499.63 354.59,500.28 354.90,500.93 355.20,501.58 355.49,502.24 355.78,502.90 356.06,503.56 356.33,504.22 356.59,504.89 356.85,505.56 357.10,506.23 357.34,506.90 357.58,507.58 357.81,508.26 358.03,508.94 358.24,509.63 358.45,510.31 358.65,511.00 358.84,511.69 359.03,512.39 359.21,513.08 359.38,513.78 359.54,514.48 359.70,515.18 359.85,515.88 360.00,516.58 360.14,517.29 360.27,518.00 360.40,518.71 360.51,519.42 360.63,520.13 360.73,520.84 360.83,521.56 360.93,522.28 361.01,522.99 361.09,523.71 361.17,524.43 361.23,525.15 361.29,525.88 361.35,526.60 361.40,527.33 361.44,528.05 361.48,528.78 361.51,529.51 361.53,530.24 361.55,530.97 361.56,531.70 361.57,532.43 361.57,533.16 361.57,533.89 361.56,534.62 361.54,535.35 361.52,536.09 361.49,536.82 361.45,537.55 361.42,538.29 361.37,539.02 361.32,539.76 361.26,540.49 361.20,541.23 361.14,541.96 361.06,542.70 360.99,543.43 360.90,544.17 360.81,544.90 360.72,545.63 360.62,546.37 360.52,547.10 360.41,547.83 360.29,548.57 360.17,549.30 360.05,550.03 359.92,550.76 359.78,551.49 359.64,552.22 359.49,552.94 359.34,553.67 359.19,554.40 359.02,555.12 358.86,555.84 358.68,556.56 358.50,557.28 358.32,558.00 358.13,558.72 357.94,559.43 357.74,560.15 357.53,560.86 357.32,561.57 357.11,562.28 356.88,562.98 356.66,563.68 356.43,564.39 356.19,565.08 355.95,565.78 355.70,566.47 355.44,567.17 355.18,567.85 354.92,568.54 354.65,569.22 354.37,569.90 354.09,570.58 353.80,571.25 353.51,571.93 353.21,572.59 352.91,573.26 352.60,573.92 352.29,574.58 351.97,575.23 351.64,575.88 351.31,576.53 350.97,577.17 350.63,577.81 350.28,578.45 349.93,579.08 349.57,579.71 349.20,580.33 348.83,580.95 348.45,581.57 348.07,582.18 347.68,582.78 347.29,583.38 346.89,583.98 346.49,584.57 346.08,585.16 345.66,585.74 345.24,586.32 344.81,586.90 344.38,587.46 343.94,588.03 343.49,588.58 343.04,589.14 342.59,589.68 342.12,590.22 341.66,590.76 341.18,591.29 340.70,591.81 340.22,592.33 339.72,592.85 339.23,593.35 338.72,593.85 338.22,594.35 337.70,594.84 337.18,595.32 336.65,595.80 336.12,596.27 335.58,596.73 335.04,597.19 334.49,597.64 333.94,598.08 333.38,598.52 332.81,598.95 332.24,599.37 331.67,599.79 331.09,600.20 330.50,600.61 329.92,601.00 329.32,601.39 328.72,601.78 328.12,602.15 327.51,602.52 326.90,602.89 326.28,603.24 325.66,603.59 325.04,603.93 324.41,604.26 323.77,604.59 323.14,604.91 322.49,605.22 321.85,605.53 321.20,605.82 320.55,606.11 319.89,606.39 319.23,606.67 318.57,606.93 317.91,607.19 317.24,607.44 316.57,607.69 315.89,607.92 315.21,608.15 314.53,608.37 313.85,608.58 313.16,608.78 312.47,608.98 311.78,609.17 311.09,609.35 310.39,609.52 309.69,609.68 308.99,609.83 308.29,609.98 307.58,610.12 306.87,610.25 306.16,610.37 305.45,610.48 304.74,610.58 304.03,610.68 303.31,610.77 302.59,610.84 301.87,610.91 301.15,610.97 300.43,611.02 299.71,611.07 298.98,611.10 298.26,611.12 297.53,611.14 296.81,611.15 296.08,611.14 295.35,611.13 294.62,611.11 293.89,611.08 293.16,611.04 292.43,610.99 291.70,610.93 290.97,610.87 290.24,610.79 289.51,610.70 288.78,610.61 288.05,610.50 287.32,610.39 286.59,610.26 285.86,610.13 285.13,609.99 284.40,609.83 283.67,609.67 282.94,609.50 282.22,609.32 281.49,609.13 280.77,608.93 280.05,608.72 279.33,608.50 278.61,608.27 277.89,608.03 277.17,607.78 276.46,607.52 275.74,607.25 275.03,606.97 274.32,606.68 273.62,606.38 272.91,606.08 272.21,605.76 271.51,605.43 270.81,605.09 272.20,603.50 271.50,600.20 269.30,600.00 268.60,602.50 267.00,603.30 266.99,603.40 266.69,603.43 266.40,603.46 266.10,603.48 265.80,603.50 265.51,603.53 265.21,603.54 264.91,603.56 264.62,603.57 264.32,603.58 264.03,603.59 263.73,603.60 263.44,603.60 263.15,603.60 262.85,603.60 262.56,603.60 262.27,603.59 261.98,603.58 261.68,603.57 261.39,603.56 261.10,603.54 260.81,603.52 260.52,603.50 260.23,603.48 259.94,603.46 259.65,603.43 259.36,603.40 259.07,603.37 258.79,603.34 258.50,603.30 258.21,603.26 257.93,603.22 257.64,603.18 257.35,603.13 257.07,603.09 256.78,603.04 256.50,602.99 256.21,602.93 255.93,602.88 255.65,602.82 255.37,602.76 255.08,602.70 254.80,602.64 254.52,602.57 254.24,602.50 253.96,602.43 253.68,602.36 253.40,602.29 253.12,602.21 252.84,602.13 252.57,602.06 252.29,601.97 252.01,601.89 251.74,601.81 251.46,601.72 251.19,601.63 250.91,601.54 250.64,601.44 250.36,601.35 250.09,601.25 249.82,601.15 249.55,601.05 249.28,600.95 249.01,600.85 248.74,600.74 248.47,600.64 248.20,600.53 247.93,600.42 247.66,600.30 247.39,600.19 247.13,600.07 246.86,599.95 246.60,599.84 246.33,599.71 246.07,599.59 245.80,599.47 245.54,599.34 245.28,599.21 245.02,599.08 244.76,598.95 244.50,598.82 244.24,598.69 243.98,598.55 243.72,598.41 243.46,598.28 243.20,598.14 242.95,597.99 242.69,597.85 242.44,597.71 242.18,597.56 241.93,597.41 241.68,597.26 241.42,597.11 241.17,596.96 240.92,596.81 240.67,596.65 240.42,596.50 240.17,596.34 239.92,596.18 239.68,596.02 239.43,595.86 239.18,595.70 238.94,595.53 238.69,595.37 238.45,595.20 238.21,595.03 237.97,594.86 237.72,594.69 237.48,594.52 237.24,594.35 237.00,594.17 236.77,594.00 236.53,593.82 236.29,593.64 236.06,593.47 235.82,593.29 235.59,593.10 235.35,592.92 235.12,592.74 234.89,592.55 234.66,592.37 234.43,592.18 234.20,592.00 233.97,591.81 233.74,591.62 233.51,591.43 233.29,591.23 233.06,591.04 232.84,590.85 232.61,590.65 232.39,590.46 232.17,590.26 231.95,590.06 231.73,589.86 231.51,589.67 231.29,589.46 231.07,589.26 230.86,589.06 230.64,588.86 230.43,588.66 230.21,588.45 230.00,588.24 229.79,588.04 229.57,587.83 229.36,587.62 229.15,587.42 228.95,587.21 228.74,587.00 228.53,586.78 228.33,586.57 228.12,586.36 227.92,586.15 227.71,585.93 227.51,585.72 227.31,585.51 227.11,585.29 226.91,585.07 226.71,584.86 226.52,584.64 226.32,584.42 226.13,584.20 225.93,583.98 225.74,583.76 225.55,583.54 225.36,583.32 225.17,583.10 224.98,582.88 224.79,582.66 224.60,582.43 224.42,582.21 224.23,581.98 224.05,581.76 223.86,581.54 223.68,581.31 223.50,581.08 223.32,580.86 223.14,580.63 222.96,580.41 222.79,580.18 222.61,579.95 222.44,579.72 222.26,579.49 222.09,579.27 221.92,579.04 221.75,578.81 221.58,578.58 221.41,578.35 221.25,578.12 221.08,577.89 220.92,577.66 220.75,577.43 220.59,577.20 220.43,576.97 220.27,576.73 220.11,576.50 219.95,576.27 219.80,576.04 219.64,575.81 219.49,575.58 219.33,575.34" fill="none" stroke="#ff00ff" stroke-width="1" shape-rendering="crispEdges"/>
<polygon points="79.5,292.5 75.5,303.5 83.5,303.5" fill="none" stroke="#ffff00" stroke-width="1" shape-rendering="crispEdges"/>
<text x="79.5" y="315" fill="#ffff00" font-size="12" text-anchor="middle" >1</text>
<polygon points="86.5,252.5 82.5,263.5 90.5,263.5" fill="none" stroke="#ffff00" stroke-width="1" shape-rendering="crispEdges"/>
<text x="86.5" y="275" fill="#ffff00" font-size="12" text-anchor="middle" >2</text>
<polygon points="95.5,237.5 91.5,248.5 99.5,248.5" fill="none" stroke="#ffff00" stroke-width="1" shape-rendering="crispEdges"/>
<text x="95.5" y="260" fill="#ffff00" font-size="12" text-anchor="middle" >3</text>
<polygon points="122.5,220.5 118.5,231.5 126.5,231.5" fill="none" stroke="#ffff00" stroke-width="1" shape-rendering="crispEdges"/>
<text x="122.5" y="243" fill="#ffff00" font-size="12" text-anchor="middle" >4</text>
<polygon points="166.5,213.5 162.5,224.5 170.5,224.5" fill="none" stroke="#ffff00" stroke-width="1" shape-rendering="crispEdges"/>
<text x="166.5" y="236" fill="#ffff00" font-size="12" text-anchor="middle" >5</text>
<polygon points="254.5,216.5 250.5,227.5 258.5,227.5" fill="none" stroke="#ffff00" stroke-width="1" shape-rendering="crispEdges"/>
<text x="254.5" y="239" fill="#ffff00" font-size="12" text-anchor="middle" >6</text>
<polygon points="430.5,241.5 426.5,252.5 434.5,252.5" fill="none" stroke="#ffff00" stroke-width="1" shape-rendering="crispEdges"/>
<text x="430.5" y="264" fill="#ffff00" font-size="12" text-anchor="middle" >7</text>
<polygon points="175.5,212.5 171.5,199.5 179.5,199.5" fill="none" stroke="#ffff00" stroke-width="1" shape-rendering="crispEdges"/>
<text x="175.5" y="196" fill="#ffff00" font-size="12" text-anchor="middle" >8</text>
<polygon points="517.5,213.5 513.5,224.5 521.5,224.5" fill="none" stroke="#00ffff" stroke-width="1" shape-rendering="crispEdges"/>
<text x="517.5" y="236" fill="#00ffff" font-size="12" text-anchor="middle" >1</text>
<polygon points="524.5,214.5 520.5,225.5 528.5,225.5" fill="none" stroke="#00ffff" stroke-width="1" shape-rendering="crispEdges"/>
<text x="524.5" y="237" fill="#00ffff" font-size="12" text-anchor="middle" >2</text>
<polygon points="533.5,215.5 529.5,226.5 537.5,226.5" fill="none" stroke="#00ffff" stroke-width="1" shape-rendering="crispEdges"/>
<text x="533.5" y="238" fill="#00ffff" font-size="12" text-anchor="middle" >3</text>
<polygon points="560.5,224.5 556.5,235.5 564.5,235.5" fill="none" stroke="#00ffff" stroke-width="1" shape-rendering="crispEdges"/>
<text x="560.5" y="247" fill="#00ffff" font-size="12" text-anchor="middle" >4</text>
<polygon points="604.5,271.5 600.5,282.5 608.5,282.5" fill="none" stroke="#00ffff" stroke-width="1" shape-rendering="crispEdges"/>
<text x="604.5" y="294" fill="#00ffff" font-size="12" text-anchor="middle" >5</text>
<polygon points="692.5,229.5 688.5,240.5 696.5,240.5" fill="none" stroke="#00ffff" stroke-width="1" shape-rendering="crispEdges"/>
<text x="692.5" y="252" fill="#00ffff" font-size="12" text-anchor="middle" >6</text>
<polygon points="869.5,214.5 865.5,225.5 873.5,225.5" fill="none" stroke="#00ffff" stroke-width="1" shape-rendering="crispEdges"/>
<text x="869.5" y="237" fill="#00ffff" font-size="12" text-anchor="middle" >7</text>
<polygon points="613.5,315.5 609.5,302.5 617.5,302.5" fill="none" stroke="#00ffff" stroke-width="1" shape-rendering="crispEdges"/>
<text x="613.5" y="299" fill="#00ffff" font-size="12" text-anchor="middle" >8</text>
<polygon points="222.5,527.5 218.5,538.5 226.5,538.5" fill="none" stroke="#ff00ff" stroke-width="1" shape-rendering="crispEdges"/>
<text x="222.5" y="550" fill="#ff00ff" font-size="12" text-anchor="middle" >1</text>
<polygon points="228.5,505.5 224.5,516.5 232.5,516.5" fill="none" stroke="#ff00ff" stroke-width="1" shape-rendering="crispEdges"/>
<text x="228.5" y="528" fill="#ff00ff" font-size="12" text-anchor="middle" >2</text>
<polygon points="242.5,482.5 238.5,493.5 246.5,493.5" fill="none" stroke="#ff00ff" stroke-width="1" shape-rendering="crispEdges"/>
<text x="242.5" y="505" fill="#ff00ff" font-size="12" text-anchor="middle" >3</text>
<polygon points="303.5,460.5 299.5,471.5 307.5,471.5" fill="none" stroke="#ff00ff" stroke-width="1" shape-rendering="crispEdges"/>
<text x="303.5" y="483" fill="#ff00ff" font-size="12" text-anchor="middle" >4</text>
<polygon points="361.5,527.5 357.5,538.5 365.5,538.5" fill="none" stroke="#ff00ff" stroke-width="1" shape-rendering="crispEdges"/>
<text x="361.5" y="550" fill="#ff00ff" font-size="12" text-anchor="middle" >5</text>
<polygon points="320.5,607.5 316.5,618.5 324.5,618.5" fill="none" stroke="#ff00ff" stroke-width="1" shape-rendering="crispEdges"/>
<text x="320.5" y="630" fill="#ff00ff" font-size="12" text-anchor="middle" >6</text>
<polygon points="219.5,575.5 215.5,586.5 223.5,586.5" fill="none" stroke="#ff00ff" stroke-width="1" shape-rendering="crispEdges"/>
<text x="219.5" y="598" fill="#ff00ff" font-size="12" text-anchor="middle" >7</text>
<polygon points="361.5,542.5 357.5,529.5 365.5,529.5" fill="none" stroke="#ff00ff" stroke-width="1" shape-rendering="crispEdges"/>
<text x="361.5" y="526" fill="#ff00ff" font-size="12" text-anchor="middle" >8</text>
<polygon points="517.5,673.5 513.5,684.5 521.5,684.5" fill="none" stroke="#00ff00" stroke-width="1" shape-rendering="crispEdges"/>
<text x="517.5" y="696" fill="#00ff00" font-size="12" text-anchor="middle" >1</text>
<polygon points="524.5,673.5 520.5,684.5 528.5,684.5" fill="none" stroke="#00ff00" stroke-width="1" shape-rendering="crispEdges"/>
<text x="524.5" y="696" fill="#00ff00" font-size="12" text-anchor="middle" >2</text>
<polygon points="533.5,673.5 529.5,684.5 537.5,684.5" fill="none" stroke="#00ff00" stroke-width="1" shape-rendering="crispEdges"/>
<text x="533.5" y="696" fill="#00ff00" font-size="12" text-anchor="middle" >3</text>
<polygon points="560.5,673.5 556.5,684.5 564.5,684.5" fill="none" stroke="#00ff00" stroke-width="1" shape-rendering="crispEdges"/>
<text x="560.5" y="696" fill="#00ff00" font-size="12" text-anchor="middle" >4</text>
<polygon points="604.5,673.5 600.5,684.5 608.5,684.5" fill="none" stroke="#00ff00" stroke-width="1" shape-rendering="crispEdges"/>
<text x="604.5" y="696" fill="#00ff00" font-size="12" text-anchor="middle" >5</text>
<polygon points="692.5,673.5 688.5,684.5 696.5,684.5" fill="none" stroke="#00ff00" stroke-width="1" shape-rendering="crispEdges"/>
<text x="692.5" y="696" fill="#00ff00" font-size="12" text-anchor="middle" >6</text>
<polygon points="869.5,673.5 865.5,684.5 873.5,684.5" fill="none" stroke="#00ff00" stroke-width="1" shape-rendering="crispEdges"/>
<text x="869.5" y="696" fill="#00ff00" font-size="12" text-anchor="middle" >7</text>
<polygon points="613.5,672.5 609.5,659.5 617.5,659.5" fill="none" stroke="#00ff00" stroke-width="1" shape-rendering="crispEdges"/>
<text x="613.5" y="656" fill="#00ff00" font-size="12" text-anchor="middle" >8</text>
<text x="431" y="244" fill="#ffff00" font-size="12" text-anchor="start" >1</text>
<text x="869" y="216" fill="#00ffff" font-size="12" text-anchor="start" >1</text>
<polygon points="79.5,354.5 72.5,361.5 86.5,361.5" fill="none" stroke="#ffff00" stroke-width="1" shape-rendering="crispEdges"/>
<polygon points="86.5,354.5 79.5,361.5 93.5,361.5" fill="none" stroke="#ffff00" stroke-width="1" shape-rendering="crispEdges"/>
<polygon points="95.5,354.5 88.5,361.5 102.5,361.5" fill="none" stroke="#ffff00" stroke-width="1" shape-rendering="crispEdges"/>
<polygon points="122.5,354.5 115.5,361.5 129.5,361.5" fill="none" stroke="#ffff00" stroke-width="1" shape-rendering="crispEdges"/>
<polygon points="166.5,354.5 159.5,361.5 173.5,361.5" fill="none" stroke="#ffff00" stroke-width="1" shape-rendering="crispEdges"/>
<polygon points="254.5,354.5 247.5,361.5 261.5,361.5" fill="none" stroke="#ffff00" stroke-width="1" shape-rendering="crispEdges"/>
<polygon points="430.5,354.5 423.5,361.5 437.5,361.5" fill="none" stroke="#ffff00" stroke-width="1" shape-rendering="crispEdges"/>
<polygon points="175.5,354.5 168.5,361.5 182.5,361.5" fill="#ffff00" stroke="#ffff00" stroke-width="1" shape-rendering="crispEdges"/>
<polygon points="517.5,354.5 510.5,361.5 524.5,361.5" fill="none" stroke="#00ffff" stroke-width="1" shape-rendering="crispEdges"/>
<polygon points="524.5,354.5 517.5,361.5 531.5,361.5" fill="none" stroke="#00ffff" stroke-width="1" shape-rendering="crispEdges"/>
<polygon points="533.5,354.5 526.5,361.5 540.5,361.5" fill="none" stroke="#00ffff" stroke-width="1" shape-rendering="crispEdges"/>
<polygon points="560.5,354.5 553.5,361.5 567.5,361.5" fill="none" stroke="#00ffff" stroke-width="1" shape-rendering="crispEdges"/>
<polygon points="604.5,354.5 597.5,361.5 611.5,361.5" fill="none" stroke="#00ffff" stroke-width="1" shape-rendering="crispEdges"/>
<polygon points="692.5,354.5 685.5,361.5 699.5,361.5" fill="none" stroke="#00ffff" stroke-width="1" shape-rendering="crispEdges"/>
<polygon points="869.5,354.5 862.5,361.5 876.5,361.5" fill="none" stroke="#00ffff" stroke-width="1" shape-rendering="crispEdges"/>
<polygon points="613.5,354.5 606.5,361.5 620.5,361.5" fill="#00ffff" stroke="#00ffff" stroke-width="1" shape-rendering="crispEdges"/>
<polygon points="16.5,673.5 9.5,680.5 23.5,680.5" fill="none" stroke="#ff00ff" stroke-width="1" shape-rendering="crispEdges"/>
<polygon points="24.5,673.5 17.5,680.5 31.5,680.5" fill="none" stroke="#ff00ff" stroke-width="1" shape-rendering="crispEdges"/>
<polygon points="34.5,673.5 27.5,680.5 41.5,680.5" fill="none" stroke="#ff00ff" stroke-width="1" shape-rendering="crispEdges"/>
<polygon points="66.5,673.5 59.5,680.5 73.5,680.5" fill="none" stroke="#ff00ff" stroke-width="1" shape-rendering="crispEdges"/>
<polygon points="118.5,673.5 111.5,680.5 125.5,680.5" fill="none" stroke="#ff00ff" stroke-width="1" shape-rendering="crispEdges"/>
<polygon points="222.5,673.5 215.5,680.5 229.5,680.5" fill="none" stroke="#ff00ff" stroke-width="1" shape-rendering="crispEdges"/>
<polygon points="430.5,673.5 423.5,680.5 437.5,680.5" fill="none" stroke="#ff00ff" stroke-width="1" shape-rendering="crispEdges"/>
<polygon points="129.5,673.5 122.5,680.5 136.5,680.5" fill="#ff00ff" stroke="#ff00ff" stroke-width="1" shape-rendering="crispEdges"/>
<polygon points="517.5,672.5 510.5,679.5 524.5,679.5" fill="none" stroke="#00ff00" stroke-width="1" shape-rendering="crispEdges"/>
<polygon points="524.5,672.5 517.5,679.5 531.5,679.5" fill="none" stroke="#00ff00" stroke-width="1" shape-rendering="crispEdges"/>
<polygon points="533.5,672.5 526.5,679.5 540.5,679.5" fill="none" stroke="#00ff00" stroke-width="1" shape-rendering="crispEdges"/>
<polygon points="560.5,672.5 553.5,679.5 567.5,679.5" fill="none" stroke="#00ff00" stroke-width="1" shape-rendering="crispEdges"/>
<polygon points="604.5,672.5 597.5,679.5 611.5,679.5" fill="none" stroke="#00ff00" stroke-width="1" shape-rendering="crispEdges"/>
<polygon points="692.5,672.5 685.5,679.5 699.5,679.5" fill="none" stroke="#00ff00" stroke-width="1" shape-rendering="crispEdges"/>
<polygon points="869.5,672.5 862.5,679.5 876.5,679.5" fill="none" stroke="#00ff00" stroke-width="1" shape-rendering="crispEdges"/>
<polygon points="613.5,672.5 606.5,679.5 620.5,679.5" fill="#00ff00" stroke="#00ff00" stroke-width="1" shape-rendering="crispEdges"/>
</g>
</g>
</svg>
<!-- status bar -->
<div class="a" style="left:0;top:684px;width:884px;height:2px;background:#e6e6e6"></div>
<div class="a" style="left:0;top:686px;width:884px;height:16px;background:#b4b4b4"></div>
<div class="a" style="left:0;top:702px;width:884px;height:1px;background:#a0a0a0"></div>
<div class="a" style="left:2px;top:686px;width:15px;height:15px;box-sizing:border-box;background:#d0d0d0;border-top:1px solid #909090;border-left:1px solid #909090;border-bottom:1px solid #f0f0f0;border-right:1px solid #f0f0f0"></div>
<div class="t" style="left:6px;top:689px;font-size:12px;color:#000">1</div>
<div class="t" style="left:21px;top:689px;font-size:12px;color:#000">Start 50 MHz</div>
<div class="t" style="left:373px;top:689px;font-size:12px;color:#000">IFBW 70 kHz</div>
<div class="t" style="left:722px;top:689px;font-size:12px;color:#000">Stop 20 GHz</div>
<div class="a" style="left:797px;top:686px;width:46px;height:15px;background:#3c3c80"></div>
<div class="t" style="left:797px;top:689px;width:46px;text-align:center;font-size:12px;color:#fff">16/16</div>
<div class="a" style="left:844px;top:686px;width:26px;height:15px;background:#3c3c80"></div>
<div class="t" style="left:844px;top:689px;width:26px;text-align:center;font-size:12px;color:#fff">Cor</div>
<div class="a" style="left:871px;top:686px;width:11px;height:15px;box-sizing:border-box;background:#d0d0d0;border-top:1px solid #909090;border-left:1px solid #909090"></div>
<div class="a" style="left:882px;top:684px;width:2px;height:19px;background:#e0e0e0"></div>
<!-- bottom bar -->
<div class="a" style="left:0;top:703px;width:1024px;height:1px;background:#606060"></div>
<div class="a" style="left:0;top:704px;width:1024px;height:1px;background:#000"></div>
<div class="a" style="left:0;top:705px;width:1024px;height:1px;background:#7a7a7a"></div>
<div class="a" style="left:0;top:706px;width:1024px;height:19px;background:#4b4b4b"></div>
<div class="a" style="left:0;top:725px;width:1024px;height:1px;background:#2a2a2a"></div>
<div class="a" style="left:0;top:726px;width:1024px;height:2px;background:#080808"></div>
<div class="a" style="left:704px;top:707px;width:48px;height:17px;box-sizing:border-box;border-bottom:1px solid #8a8a8a;border-right:1px solid #6a6a6a;background:#404088;border-top:1px solid #101010;border-left:1px solid #101010"></div>
<div class="t" style="left:704px;top:708px;width:48px;text-align:center;font-size:16.5px;color:#fff">Hold</div>
<div class="a" style="left:753px;top:707px;width:39px;height:17px;box-sizing:border-box;border-bottom:1px solid #8a8a8a;border-right:1px solid #6a6a6a;background:#404040;border-top:1px solid #101010;border-left:1px solid #101010"></div>
<div class="t" style="left:753px;top:708px;width:39px;text-align:center;font-size:16.5px;color:#808080">Stop</div>
<div class="a" style="left:793px;top:707px;width:53px;height:17px;box-sizing:border-box;border-bottom:1px solid #8a8a8a;border-right:1px solid #6a6a6a;background:#404040;border-top:1px solid #101010;border-left:1px solid #101010"></div>
<div class="t" style="left:793px;top:708px;width:53px;text-align:center;font-size:16.5px;color:#808080">ExtRef</div>
<div class="a" style="left:848px;top:707px;width:31px;height:17px;box-sizing:border-box;border-bottom:1px solid #8a8a8a;border-right:1px solid #6a6a6a;background:#404040;border-top:1px solid #101010;border-left:1px solid #101010"></div>
<div class="t" style="left:848px;top:708px;width:31px;text-align:center;font-size:16.5px;color:#808080">Svc</div>
<div class="a" style="left:881px;top:707px;width:139px;height:17px;box-sizing:border-box;background:#404040;border:1px solid #808080;border-top-color:#101010;border-left-color:#101010"></div>
<div class="t" style="left:885px;top:708px;font-size:16.5px;color:#fff">2021-12-17 10:26</div>
</body></html>
